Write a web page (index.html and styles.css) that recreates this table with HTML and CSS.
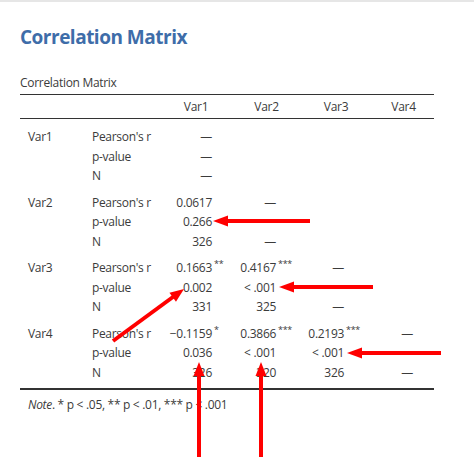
FILE: index.html
```html
<!DOCTYPE html>
<html lang="en">
<head>
<meta charset="utf-8">
<title>Correlation Matrix</title>
<link rel="stylesheet" href="styles.css">
</head>
<body>
<div class="page">
  <div class="topbar"></div>
  <div class="content">
    <h1 class="title">Correlation Matrix</h1>
    <div class="caption">Correlation Matrix</div>
    <table class="matrix">
      <colgroup>
        <col class="c-var"><col class="c-stat">
        <col class="c-v1"><col class="c-s1">
        <col class="c-v2"><col class="c-s2">
        <col class="c-v3"><col class="c-s3">
        <col class="c-v4"><col class="c-s4">
      </colgroup>
      <thead>
        <tr>
          <th colspan="2"></th>
          <th colspan="2">Var1</th>
          <th colspan="2">Var2</th>
          <th colspan="2">Var3</th>
          <th colspan="2">Var4</th>
        </tr>
      </thead>
      <tbody class="first">
        <tr class="gstart"><td class="var">Var1</td><td class="stat">Pearson's r</td><td class="num">—</td><td class="sup"></td><td class="num"></td><td class="sup"></td><td class="num"></td><td class="sup"></td><td class="num"></td><td class="sup"></td></tr>
        <tr><td></td><td class="stat">p-value</td><td class="num">—</td><td class="sup"></td><td class="num"></td><td class="sup"></td><td class="num"></td><td class="sup"></td><td class="num"></td><td class="sup"></td></tr>
        <tr><td></td><td class="stat">N</td><td class="num">—</td><td class="sup"></td><td class="num"></td><td class="sup"></td><td class="num"></td><td class="sup"></td><td class="num"></td><td class="sup"></td></tr>
      </tbody>
      <tbody>
        <tr class="gstart"><td class="var">Var2</td><td class="stat">Pearson's r</td><td class="num">0.0617</td><td class="sup"></td><td class="num">—</td><td class="sup"></td><td class="num"></td><td class="sup"></td><td class="num"></td><td class="sup"></td></tr>
        <tr><td></td><td class="stat">p-value</td><td class="num">0.266</td><td class="sup"></td><td class="num"></td><td class="sup"></td><td class="num"></td><td class="sup"></td><td class="num"></td><td class="sup"></td></tr>
        <tr><td></td><td class="stat">N</td><td class="num">326</td><td class="sup"></td><td class="num">—</td><td class="sup"></td><td class="num"></td><td class="sup"></td><td class="num"></td><td class="sup"></td></tr>
      </tbody>
      <tbody>
        <tr class="gstart"><td class="var">Var3</td><td class="stat">Pearson's r</td><td class="num">0.1663</td><td class="sup"><sup>**</sup></td><td class="num">0.4167</td><td class="sup"><sup>***</sup></td><td class="num">—</td><td class="sup"></td><td class="num"></td><td class="sup"></td></tr>
        <tr><td></td><td class="stat">p-value</td><td class="num">0.002</td><td class="sup"></td><td class="num">&lt; .001</td><td class="sup"></td><td class="num"></td><td class="sup"></td><td class="num"></td><td class="sup"></td></tr>
        <tr><td></td><td class="stat">N</td><td class="num">331</td><td class="sup"></td><td class="num">325</td><td class="sup"></td><td class="num">—</td><td class="sup"></td><td class="num"></td><td class="sup"></td></tr>
      </tbody>
      <tbody class="last">
        <tr class="gstart"><td class="var">Var4</td><td class="stat">Pearson's r</td><td class="num">−0.1159</td><td class="sup"><sup>*</sup></td><td class="num">0.3866</td><td class="sup"><sup>***</sup></td><td class="num">0.2193</td><td class="sup"><sup>***</sup></td><td class="num">—</td><td class="sup"></td></tr>
        <tr><td></td><td class="stat">p-value</td><td class="num">0.036</td><td class="sup"></td><td class="num">&lt; .001</td><td class="sup"></td><td class="num">&lt; .001</td><td class="sup"></td><td class="num"></td><td class="sup"></td></tr>
        <tr class="gend"><td></td><td class="stat">N</td><td class="num">326</td><td class="sup"></td><td class="num">320</td><td class="sup"></td><td class="num">326</td><td class="sup"></td><td class="num">—</td><td class="sup"></td></tr>
      </tbody>
    </table>
    <div class="note"><i>Note</i>. * p &lt; .05, ** p &lt; .01, *** p &lt; .001</div>
  </div>
  <svg class="arrows" width="474" height="457" viewBox="0 0 474 457" aria-hidden="true">
    <g fill="#f00" stroke="#f00">
      <line x1="310" y1="221" x2="224" y2="221" stroke-width="4"/>
      <polygon points="213,221 228,215.5 228,226.5" stroke="none"/>
      <line x1="373" y1="287" x2="290" y2="287" stroke-width="4"/>
      <polygon points="279,287 294,281.5 294,292.5" stroke="none"/>
      <line x1="441" y1="353" x2="358" y2="353" stroke-width="4"/>
      <polygon points="347,353 362,347.5 362,358.5" stroke="none"/>
      <line x1="113" y1="341" x2="175" y2="295.5" stroke-width="4"/>
      <polygon points="184,289 175.95,301.7 169.45,292.8" stroke="none"/>
      <line x1="199" y1="460" x2="199" y2="372" stroke-width="4"/>
      <polygon points="199,362 193.5,376 204.5,376" stroke="none"/>
      <line x1="261" y1="460" x2="261" y2="372" stroke-width="4"/>
      <polygon points="261,362 255.5,376 266.5,376" stroke="none"/>
    </g>
  </svg>
</div>
</body>
</html>
```

FILE: styles.css
```css
html, body {
  margin: 0;
  padding: 0;
  background: #ffffff;
}

.page {
  position: relative;
  width: 474px;
  height: 457px;
  overflow: hidden;
  font-family: "Open Sans", "Noto Sans", sans-serif;
  color: #3b3b3b;
}

.topbar {
  height: 2px;
  background: #e6e6e6;
}

.content {
  padding: 23px 0 0 20px;
}

.title {
  margin: 0;
  font-size: 19px;
  line-height: 24px;
  font-weight: 700;
  letter-spacing: -0.5px;
  color: #3e6da9;
}

.caption {
  margin-top: 26px;
  font-size: 12px;
  line-height: 16px;
  letter-spacing: -0.3px;
}

.matrix {
  margin-top: 3px;
  width: 414px;
  table-layout: fixed;
  border-collapse: collapse;
  font-size: 12px;
  letter-spacing: -0.3px;
}

.c-var { width: 64px; }
.c-stat { width: 74px; }
.c-v1 { width: 54px; }
.c-s1 { width: 22px; }
.c-v2 { width: 42px; }
.c-s2 { width: 23px; }
.c-v3 { width: 45px; }
.c-s3 { width: 29px; }
.c-v4 { width: 40px; }
.c-s4 { width: 21px; }

.matrix thead tr {
  border-top: 1px solid #333333;
  border-bottom: 1px solid #333333;
}

.matrix th {
  font-weight: 400;
  text-align: center;
  line-height: 16px;
  padding: 4px 0 3px;
}

.matrix td {
  padding: 0;
  line-height: 19.5px;
  white-space: nowrap;
}

.matrix tbody.last {
  border-bottom: 2px solid #333333;
}

.matrix tr.gstart td {
  padding-top: 7px;
}

.matrix tbody.first tr.gstart td {
  padding-top: 8px;
}

.matrix tr.gend td {
  padding-bottom: 6px;
}

.var {
  padding-left: 8px !important;
}

.stat {
  padding-left: 8px !important;
}

.num {
  text-align: right;
}

.sup {
  text-align: left;
  padding-left: 2px !important;
}

.sup sup {
  font-size: 9px;
  line-height: 0;
  vertical-align: 5px;
}

.note {
  padding: 7px 0 0 8px;
  font-size: 12px;
  line-height: 16px;
  letter-spacing: -0.3px;
}

.arrows {
  position: absolute;
  left: 0;
  top: 0;
  pointer-events: none;
}
```
